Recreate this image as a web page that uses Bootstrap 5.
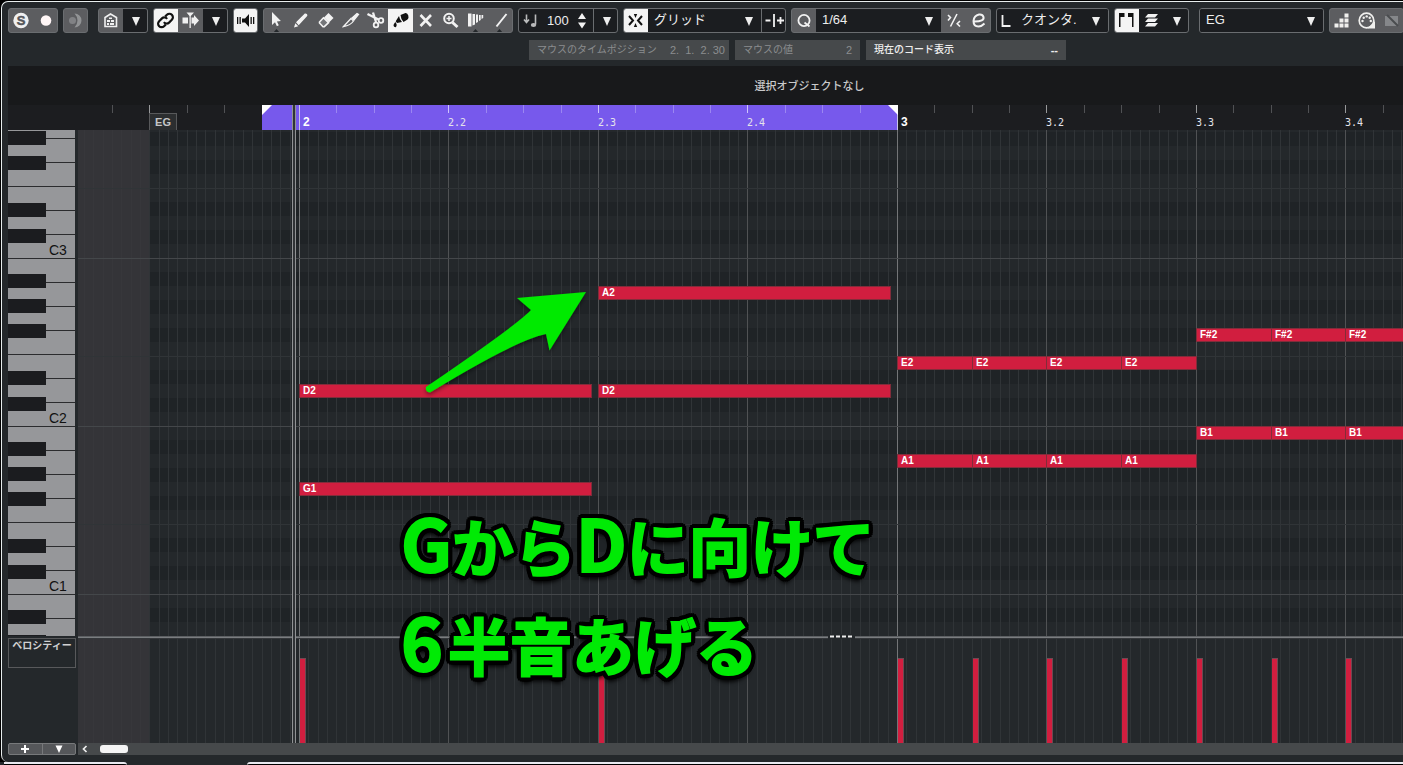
<!DOCTYPE html>
<html lang="ja">
<head>
<meta charset="utf-8">
<meta name="viewport" content="width=device-width, initial-scale=1">
<title>キーエディター</title>
<link href="https://cdn.jsdelivr.net/npm/bootstrap@5.3.0/dist/css/bootstrap.min.css" rel="stylesheet">
<style>
:root{--bg:#24282b;--grey:#5c5d60;--line:#6a6d70;--field:#1b1d20;--info:#46494b;--note:#d11e3f}
body{background:#000;color:#eee;font-family:"Liberation Sans","Noto Sans CJK JP",sans-serif;font-size:13px;line-height:16px}
.frame{background:var(--bg);border:1px solid #e8eeee;border-width:1px 0 0 1px;border-radius:7px 0 0 7px;margin:1px 0 0 1px;padding:6px 0 0 6px;min-height:0}
.tools{gap:5px;height:25px}
.grp{display:flex;flex:none;height:25px;border:1px solid var(--line);border-radius:3px;background:var(--grey);overflow:hidden}
.grp.field{background:var(--field)}
.grp.apart{margin-left:5px}
.grp>*{flex:none}
.tb{width:25px;height:25px;margin:-1px 0;padding:0;border:0;background:none;color:#eee;display:block}
.grp>.tb:first-child{margin-left:-1px}
.grp>.tb:last-child{margin-right:-1px}
.tb svg{display:block;width:25px;height:25px}
.tb.on{background:#f4f4f4;color:#111}
.tb.dk{background:var(--field)}
.tb.off{color:#919395}
.tb.spin,.tb.spin svg{width:18px}
.grp select{appearance:none;border:0;color:#eee;font-size:13px;line-height:16px;padding:0 20px 1px 6px;margin:0;background:var(--field) url("data:image/svg+xml,%3Csvg xmlns='http://www.w3.org/2000/svg' width='8' height='9'%3E%3Cpath d='M0 0h8L4 9z' fill='%23eee'/%3E%3C/svg%3E") no-repeat right 8px top 8px}
.tempo{width:28px;border:0;padding:0;background:none;color:#eee;font-size:13px}
.w-snap{width:113px}.w-q{width:125px}.w-len{width:87px}.w-part{width:123px}
.sep{border-left:1px solid var(--line)}
.infos{gap:6px;margin:7px 0 6px 521px;font-size:10px}
.infos>div{background:var(--info);height:20px;padding:0 8px;color:#8b8d8f;flex:none}
.infos .num{font-size:11px;white-space:pre}
.i-lg{width:200px}.i-sm{width:125px}
.infos>.lit{color:#eee;font-weight:500}
.status{background:#18191b;height:39px;padding-left:208px;font-size:11px;font-weight:500;color:#c9cacb}
.side{width:68px}
.gap-col{width:2px}
.ruler{height:25px;background:#1c1d20}
.ruler-blank{width:70px;background:#1c1d20}
.zone{position:relative;overflow:hidden;background:var(--bg)}
.zone svg{position:absolute;left:0;top:0;width:100%;height:100%}
.ruler.zone{background:#1c1d20}
.tick{position:absolute;bottom:0;font:10px/14px "DejaVu Sans Mono",monospace;color:#e4e4ea}
.tick.bar{font:bold 12px/15px "Liberation Sans",sans-serif;color:#fff}
.part{position:absolute;left:71px;bottom:0;width:28px;height:17px;border:1px solid #58595b;border-bottom:0;background:#2c2e30;font:bold 11px/16px "Liberation Sans",sans-serif;color:#c4c5c6;text-align:center}
.rollrow{min-height:0}
.ev{position:absolute;height:14px;padding:0 0 0 3px;border:1px solid #822c3a;background:var(--note);color:#fff;font-weight:bold;font-size:10px;line-height:12px;white-space:nowrap}
.split{height:3px;background:linear-gradient(#5c5f62 1px,#7a7d80 1px 2px,#34373a 2px)}
.lane{height:104px}
.lane-name{width:68px;height:30px;border:1px solid #58595b;font-size:10px;font-weight:bold;line-height:14px;color:#d0d1d2;text-align:center;white-space:nowrap;margin-top:-1px}
.vel{position:absolute;bottom:0;width:6px;height:85px;background:var(--note);border:1px solid #6d4a52;border-width:1px 1px 0 0}
.scroll{height:12px;background:var(--info)}
.mini{height:12px;width:68px;background:#55575a;border:1px solid #77797b;border-radius:2px;overflow:hidden}
.mini button{flex:1;border:0;padding:0;background:none;color:#fff;display:block;line-height:0}
.mini button+button{border-left:1px solid #77797b}
.thumb{width:28px;height:8px;border-radius:3px;background:#f4f4f4;margin-left:9px}
.arrow{width:13px;height:12px;padding:0;border:0;background:none;color:#eee;line-height:0}
.foot{height:7px}
.edge{height:3px;background:var(--bg)}
.edge i{background:#000;border-top:2px solid #e9e9f0;height:3px}
.e1{width:123px;border-radius:0 4px 0 0;margin-left:4px}.e2{width:120px}.e3{flex:1;border-radius:4px 0 0 0}
.over{position:absolute;left:0;top:0;width:100%;height:100%;pointer-events:none;z-index:3}
.work{position:relative;min-height:0}
.work>.over svg{position:absolute;left:-8px;top:-105px;width:1403px;height:765px;overflow:visible}
.caption{position:absolute;left:393px;top:391px;margin:0;color:#00ea05;font:bold 62px/99px "Noto Sans CJK JP",sans-serif;white-space:nowrap;-webkit-text-stroke:2px #00ea05;
text-shadow:5px 0 #000,-5px 0 #000,0 5px #000,0 -5px #000,4px 4px #000,-4px 4px #000,4px -4px #000,-4px -4px #000,5px 2px #000,5px -2px #000,-5px 2px #000,-5px -2px #000,2px 5px #000,-2px 5px #000,2px -5px #000,-2px -5px #000,2px 2px #000,-2px 2px #000,2px -2px #000,-2px -2px #000,0 7px 4px #000}
.caption span{font-size:71px;line-height:1px}
.caption .digit{padding-right:5px}
</style>
</head>
<body class="vh-100 d-flex flex-column overflow-hidden">
<main class="frame d-flex flex-column flex-grow-1">
<div class="tools d-flex" role="toolbar">
  <div class="grp">
    <button class="tb" aria-label="ソロ"><svg viewBox="0 0 25 25"><circle cx="13" cy="12.500" r="7.700" fill="#f0f0f0"/><text x="13" y="17" font-size="13" font-weight="bold" text-anchor="middle" fill="#55565a" stroke="#55565a" stroke-width=".5">S</text></svg></button>
    <button class="tb" aria-label="録音"><svg viewBox="0 0 25 25"><circle cx="13" cy="12.500" r="5.300" fill="#fff6f6"/></svg></button>
  </div>
  <div class="grp"><button class="tb off" aria-label="フィードバック"><svg viewBox="0 0 25 25" fill="currentColor"><circle cx="9.500" cy="12.500" r="3.500" opacity=".7"/><path d="M11.500 5.500a7 7 0 1 1 0 14q3-3 3-7t-3-7z"/></svg></button></div>
  <div class="grp apart">
    <button class="tb" aria-label="表示"><svg viewBox="0 0 25 25"><path d="M7 18.500V9.500L12.500 6 18.500 9.500v9z" fill="none" stroke="#f0f0f0" stroke-width="1.600"/><path d="M9 12h3v2H9zm4 0h3v2h-3zm-4 3h2v2H9zm3 0h4v2h-4zM11 9.500h3v1.500h-3z" fill="#f0f0f0"/></svg></button>
    <button class="tb dk" aria-label="表示メニュー"><svg viewBox="0 0 25 25"><path d="M9 9h8l-4 9z" fill="#eee"/></svg></button>
  </div>
  <div class="grp">
    <button class="tb on" aria-label="リンク"><svg viewBox="0 0 25 25"><g fill="none" stroke="#111" stroke-width="2.200" transform="rotate(-45 12.500 12.500)"><path d="M10 15.500H7.500a3.500 3.500 0 0 1 0-7h4a3.500 3.500 0 0 1 3.300 4"/><path d="M15 9.500h2.500a3.500 3.500 0 0 1 0 7h-4a3.500 3.500 0 0 1-3.300-4"/></g></svg></button>
    <button class="tb" aria-label="自動スクロール"><svg viewBox="0 0 25 25" fill="#f0f0f0"><path d="M4.500 9.500h5.500v6H4.500zM13.500 9.500H16V7l5 5.500-5 5.500v-2.500h-2.500zM8.500 4.500h7.500l-3.200 3.500V20h-1.300V8z"/></svg></button>
    <button class="tb dk" aria-label="スクロールメニュー"><svg viewBox="0 0 25 25"><path d="M9 9h8l-4 9z" fill="#eee"/></svg></button>
  </div>
  <div class="grp"><button class="tb on" aria-label="試聴"><svg viewBox="0 0 25 25" fill="#111"><path d="M9 10.500h3l4-4.500v13l-4-4.500H9zM4 9h1.300v7H4zM6.500 9h1.300v7H6.500zM17.500 9h1.300v7h-1.300zM20 9h1.300v7H20z"/></svg></button></div>
  <div class="grp">
    <button class="tb" aria-label="選択"><svg viewBox="0 0 25 25"><path d="M9 4v13l3-2.700 1.900 4 1.900-1-1.900-3.800 4-.5z" fill="#f2f2f2"/><path d="M10 25l3.500-4 3.500 4z" fill="#24282b"/></svg></button>
    <button class="tb" aria-label="鉛筆"><svg viewBox="0 0 25 25" fill="#f2f2f2"><path d="M6 19.500l1.300-4.300 3 3zM8 14.200L16.800 5.600q1-.6 2 .4t.4 2l-8.500 9.300z"/></svg></button>
    <button class="tb" aria-label="消しゴム"><svg viewBox="0 0 25 25"><path d="M11 9.500L15.500 5l5 5-4.500 4.500z" fill="#f2f2f2"/><path d="M10.500 9.800L6.500 14v1l3.500 3.700h1.300l4.200-4z" fill="#747679" stroke="#f2f2f2" stroke-width="1.600"/></svg></button>
    <button class="tb" aria-label="分割"><svg viewBox="0 0 25 25" fill="none" stroke="#f2f2f2" stroke-width="1.300"><path d="M5.500 18.500L13 10.500l2.500 2.500q-3 4.500-10 5.500z"/><path d="M14 10l5-4.500 1.500 1L16 12z" fill="#f2f2f2"/></svg></button>
    <button class="tb" aria-label="はさみ"><svg viewBox="0 0 25 25" fill="none" stroke="#f2f2f2" stroke-width="1.800"><path d="M4.500 6l11 5.500M10 4.500l3 9.500" stroke-width="2.300"/><circle cx="18" cy="12.500" r="2.300"/><circle cx="13" cy="17" r="2.300"/></svg></button>
    <button class="tb on" aria-label="のり"><svg viewBox="0 0 25 25" fill="#111"><path d="M12.500 7l5-2q2-.2 2.800 2.500t-.8 4l-4 2.500q-2.700-3-3-7zM11 8q.5 3.500 3 6L9 15l-1.300-1.800zM7.300 14q2.500 3 .5 5.200-3-.5-2-3z"/></svg></button>
    <button class="tb" aria-label="ミュート"><svg viewBox="0 0 25 25"><path d="M7.500 7l10.500 11M18 7L7.500 18" stroke="#f2f2f2" stroke-width="2.600"/></svg></button>
    <button class="tb" aria-label="ズーム"><svg viewBox="0 0 25 25" fill="none" stroke="#f2f2f2" stroke-width="2"><circle cx="11" cy="10.500" r="4.800"/><path d="M11 8v5M8.500 10.500h5" stroke-width="1.500"/><path d="M14.500 14.500l5 4.500" stroke-width="3"/></svg></button>
    <button class="tb" aria-label="トリム"><svg viewBox="0 0 25 25"><path d="M5 5.500h3.500v13H5zM9.500 6H12v10.500L9.500 17.500zM13 6.500h2V14l-2 1zM16 7h1.700v5L16 13zM18.500 7h1.700v3l-1.700 1z" fill="#f2f2f2"/><path d="M9 25l3.500-4 3.500 4z" fill="#24282b"/></svg></button>
    <button class="tb" aria-label="ライン"><svg viewBox="0 0 25 25"><path d="M8.500 18.500L18.500 6" stroke="#f2f2f2" stroke-width="2"/><path d="M8 25l3.500-4 3.500 4z" fill="#24282b"/></svg></button>
  </div>
  <div class="grp field">
    <label class="tb" for="vel" aria-label="ベロシティー"><svg viewBox="0 0 25 25"><g fill="none" stroke="#b9babb" stroke-width="1.600"><path d="M8.500 6.500v8M6 11.500l2.500 3 2.500-3"/><path d="M17.500 6.500v10"/></g><ellipse cx="15.500" cy="17" rx="2.700" ry="2" fill="#b9babb"/></svg></label>
    <span class="ps-1"></span><input id="vel" class="tempo" value="100">
    <button class="tb spin" aria-label="増減"><svg viewBox="5 0 18 25"><path d="M8 11l4-6 4 6zM8 14.500h8l-4 6z" fill="#f2f2f2"/></svg></button>
    <button class="tb sep" aria-label="ベロシティーメニュー"><svg viewBox="0 0 25 25"><path d="M9 9h8l-4 9z" fill="#eee"/></svg></button>
  </div>
  <div class="grp field">
    <button class="tb on" aria-label="スナップ"><svg viewBox="0 0 25 25" fill="none" stroke="#111" stroke-width="2"><path d="M6 8l4 4.500L6 17M19 8l-4 4.500L19 17"/><path d="M10.800 6h3.400l-1.700 4zM10.800 19h3.400l-1.700-4z" fill="#111" stroke="none"/></svg></button>
    <select class="w-snap" aria-label="スナップタイプ"><option>グリッド</option></select>
    <button class="tb sep" aria-label="グリッド相対"><svg viewBox="0 0 25 25"><path d="M3.500 12.500h5M12 6v13M15 12.500h7M18.500 9v7" stroke="#f2f2f2" stroke-width="1.800"/></svg></button>
  </div>
  <div class="grp">
    <button class="tb" aria-label="クオンタイズ適用"><svg viewBox="0 0 25 25" fill="none" stroke="#f2f2f2" stroke-width="1.800"><circle cx="13" cy="12.500" r="5.600"/><path d="M13.500 14.500l5 4"/></svg></button>
    <select class="w-q" aria-label="クオンタイズ"><option>1/64</option></select>
    <button class="tb" aria-label="ソフトクオンタイズ"><svg viewBox="0 0 25 25" fill="none" stroke="#f2f2f2" stroke-width="1.600"><path d="M7 7l2.500 2.500L7 12.500M16 6L9.500 18.500M19 13l-2.800 2.800L19 18.500"/></svg></button>
    <button class="tb" aria-label="クオンタイズパネル"><svg viewBox="0 0 25 25" fill="none" stroke="#f2f2f2" stroke-width="2"><path d="M8.500 13.500q10 0 9-4.500-1-3-4.500-2.500-5 1-5.500 6.500 0 5.500 5 5.500 3 0 6-3"/></svg></button>
  </div>
  <div class="grp field">
    <span class="tb"><svg viewBox="0 0 25 25"><path d="M6.500 7v11h8" fill="none" stroke="#f2f2f2" stroke-width="1.800"/></svg></span>
    <select class="w-len ps-0" aria-label="長さ"><option>クオンタ.</option></select>
  </div>
  <div class="grp field">
    <button class="tb on" aria-label="パート境界"><svg viewBox="0 0 25 25" fill="#111"><path d="M5 5h5.500v4H6.500v10H5zM14 5h5.500v14H18V9h-4z"/></svg></button>
    <button class="tb" aria-label="レイヤー"><svg viewBox="0 0 25 25" fill="#f2f2f2"><path d="M9 6h10l-3 3.500H6zM9 10.500h10L16 14H6zM9 15h10l-3 3.500H6z"/></svg></button>
    <button class="tb" aria-label="レイヤーメニュー"><svg viewBox="0 0 25 25"><path d="M9 9h8l-4 9z" fill="#eee"/></svg></button>
  </div>
  <div class="grp field apart"><select class="w-part" aria-label="パート"><option>EG</option></select></div>
  <div class="grp">
    <button class="tb" aria-label="ステップ入力"><svg viewBox="0 0 25 25" fill="#f0f0ee"><path d="M5.500 15.500h4v4h-4zM10.500 15.500h4v4h-4zM15.500 15.500h4v4h-4zM10.500 10.500h4v4h-4zM15.500 10.500h4v4h-4zM15.500 5.500h4v4h-4z"/></svg></button>
    <button class="tb" aria-label="MIDI入力"><svg viewBox="0 0 25 25"><circle cx="12.500" cy="12.500" r="7.300" fill="none" stroke="#f0f0ee" stroke-width="1.700"/><g fill="#f0f0ee"><circle cx="8.500" cy="13" r="1.200"/><circle cx="9.700" cy="9.700" r="1.200"/><circle cx="12.700" cy="8.400" r="1.200"/><circle cx="15.700" cy="9.700" r="1.200"/><circle cx="16.800" cy="13" r="1.200"/><path d="M21 13v7.500h-7.500z"/></g></svg></button>
    <button class="tb off" aria-label="入力オプション"><svg viewBox="0 0 25 25"><path d="M6 8h13v10H6z" fill="#85878a"/><path d="M8 7l11 11" stroke="#4a4c4f" stroke-width="2"/></svg></button>
  </div>
</div>
<div class="infos d-flex">
  <div class="i-lg d-flex justify-content-between align-items-center pe-1"><span>マウスのタイムポジション</span><span class="num">2.  1.  2. 30</span></div>
  <div class="i-sm d-flex justify-content-between align-items-center"><span>マウスの値</span><span class="num">2</span></div>
  <div class="i-lg lit d-flex justify-content-between align-items-center"><span>現在のコード表示</span><b class="num">--</b></div>
</div>
<div class="status d-flex align-items-center justify-content-center">選択オブジェクトなし</div>
<section class="work d-flex flex-column flex-grow-1">
  <div class="d-flex">
    <div class="ruler-blank"></div>
    <div class="ruler zone flex-grow-1" id="ruler"><svg></svg><div class="part">EG</div></div>
  </div>
  <div class="rollrow d-flex flex-grow-1">
    <div class="side zone" id="keys"><svg></svg></div><div class="gap-col"></div>
    <div class="zone flex-grow-1" id="roll"><svg></svg></div>
  </div>
  <div class="d-flex"><div class="side"></div><div class="gap-col"></div><div class="split flex-grow-1"></div></div>
  <div class="d-flex">
    <div class="side"><div class="lane-name">ベロシティー</div></div><div class="gap-col"></div>
    <div class="zone lane flex-grow-1" id="lane"><svg></svg></div>
  </div>
  <div class="d-flex">
    <div class="mini d-flex">
      <button aria-label="レーン追加"><svg width="10" height="10"><path d="M5 1v8M1 5h8" stroke="#fff" stroke-width="2"/></svg></button>
      <button aria-label="レーンメニュー"><svg width="10" height="10"><path d="M1.500 1.500h7L5 9z" fill="#fff"/></svg></button>
    </div>
    <div class="gap-col"></div>
    <div class="scroll d-flex flex-grow-1 align-items-center"><button class="arrow" aria-label="左へ"><svg width="10" height="10"><path d="M6.500 2L3.500 5l3 3" fill="none" stroke="#eee" stroke-width="1.700"/></svg></button><div class="thumb"></div></div>
  </div>
  <div class="over">
    <svg>
      <defs><filter id="soft" x="-10%" y="-10%" width="120%" height="130%"><feDropShadow dx="0" dy="2" stdDeviation="2" flood-opacity=".5"/></filter></defs>
      <path d="M262 105h10l-10 10zM888 105h10v10z" fill="#fff"/>
      <path d="M292 105h4v638h-4z" fill="#303336"/><path d="M292 105h1v638h-1zM295 105h1v638h-1z" fill="#909294"/>
      <path d="M828 634h27v5h-27z" fill="#24282b"/><path d="M830 636.500h24" stroke="#eee" stroke-width="2" stroke-dasharray="4 2"/>
      <path d="M586 292L517 298l14 12Q517 325 426 387q-1 5 4 5.500Q516 340 546 334l3.500 16.500z" fill="#00ea05" filter="url(#soft)"/>
    </svg>
    <p class="caption"><span>G</span>から<span>D</span>に向けて<br><span class="digit">6</span>半音あげる</p>
  </div>
</section>
<div class="foot"></div>
</main>
<div class="edge d-flex"><i class="e1"></i><span class="e2"></span><i class="e3"></i></div>
<script>
// Time scale: beat 0 is the start of part "EG"; one beat is 149.5px wide.
const START = 71, BEAT = 149.5, OCTAVE = 168, ROW = 14, H = 1400, W = 3000;
const tx = b => Math.round(START + .4 + b * BEAT);
const rect = (x, y, w, h, f) => `<rect x="${x}" y="${y}" width="${w}" height="${h}" fill="${f}"/>`;
const put = (id, s) => document.querySelector('#' + id + ' svg').innerHTML = s;

// Vertical grid lines in 1/64 steps
function lines(h) {
  let s = '';
  for (let i = -7; i < 300; i++) {
    const x = tx(i / 16), bar = i > 0 && (i - 16) % 64 === 0, beat = i > 0 && i % 16 === 0;
    s += rect(x, 0, 1, h, bar ? '#737577' : beat ? '#505254' : i < 0 ? '#37373b' : '#303437');
  }
  return s;
}
// Note rows: octave borders lie 128px below the top edge
let g = rect(0, 0, W, H, '#24282b');
for (let o = -1; o < 8; o++) {
  const y = 128 + o * OCTAVE;
  for (const r of [1, 3, 5, 8, 10]) g += rect(0, y + r * ROW, W, ROW, '#1f2326');
}
g += rect(0, 0, START, H, '#343438') + lines(H);
for (let o = -1; o < 8; o++) {
  const y = 128 + o * OCTAVE;
  g += rect(0, y, W, 1, '#44474a') + rect(0, y + 7 * ROW, W, 1, '#303437');
}
put('roll', g);
put('lane', rect(0, 0, START, H, '#343438') + lines(H));

// Keyboard
let k = rect(0, 0, 67, H, '#96979a');
for (let o = -1; o < 8; o++) {
  const y = 128 + o * OCTAVE;
  for (let i = 0; i < 7; i++) k += rect(0, y + i * 24, 67, 1, '#2b2c2e');
  for (const b of [16, 41, 66, 113, 139]) k += rect(0, y + b, 38, 14, '#1b1c1f');
  if (o >= 0 && o < 3) k += `<text x="41" y="${y - 3}" font-size="14" fill="#111">C${3 - o}</text>`;
}
put('keys', k);

// Ruler
let r = rect(184, 0, tx(5) - 184, 25, '#7759ec');
for (let i = -1; i < 80; i++) {
  const x = tx(i / 4), inLoop = i >= 4 && i < 20;
  r += (i > 0 && (i - 4) % 16 === 0) ? rect(x, 0, 1, 25, '#c9c5e6')
     : rect(x, 0, 1, 8, i % 4 === 0 ? (inLoop ? '#cfc5fb' : '#98999b') : (inLoop ? '#9b86f1' : '#505154'));
}
put('ruler', r);
const add = (id, cls, x, w, y, t) => {
  const d = document.createElement('div');
  d.className = cls; d.textContent = t; d.style.left = x + 'px';
  if (w) d.style.width = w + 'px';
  if (y !== null) d.style.top = y + 'px';
  document.getElementById(id).append(d);
};
for (let b = 1; b < 9; b++) {
  const bar = 2 + Math.floor((b - 1) / 4), q = (b - 1) % 4;
  q ? add('ruler', 'tick', tx(b), 0, null, bar + '.' + (q + 1)) : add('ruler', 'tick bar', tx(b) + 4, 0, null, bar);
}
// Notes: [name, row, start beat, length in beats]
const notes = [['A2', 11, 3, 1.955], ['D2', 18, 1, 1.955], ['D2', 18, 3, 1.955], ['G1', 25, 1, 1.955]];
for (let i = 0; i < 4; i++) notes.push(['E2', 16, 5 + i / 2, .5], ['A1', 23, 5 + i / 2, .5]);
for (let i = 0; i < 3; i++) notes.push(['F#2', 14, 7 + i / 2, .5], ['B1', 21, 7 + i / 2, .5]);
for (const [n, row, b, len] of notes) add('roll', 'ev', tx(b), tx(b + len) - tx(b) + 1, 2 + row * ROW, n);
for (const b of [1, 3, 5, 5.5, 6, 6.5, 7, 7.5, 8]) add('lane', 'vel', tx(b) + 1, 0, null, '');
</script>
<script src="https://cdn.jsdelivr.net/npm/bootstrap@5.3.0/dist/js/bootstrap.bundle.min.js"></script>
</body>
</html>
